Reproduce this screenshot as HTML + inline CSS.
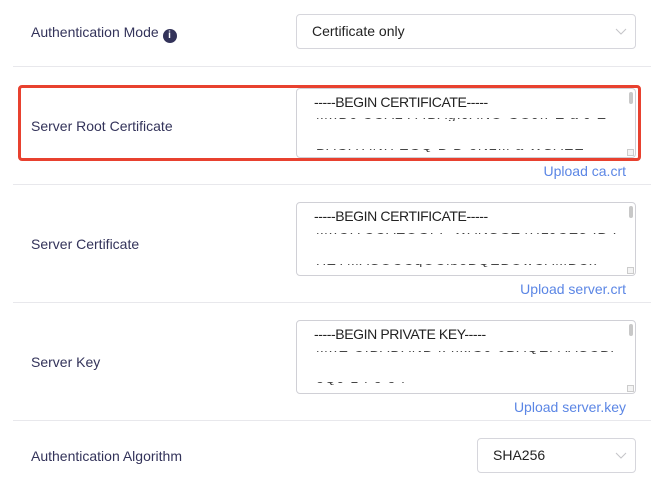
<!DOCTYPE html>
<html><head><style>
*{margin:0;padding:0;box-sizing:border-box}
body{width:669px;height:489px;background:#fff;font-family:"Liberation Sans",sans-serif;position:relative;overflow:hidden}
.lbl{position:absolute;left:31px;font-size:14px;color:#33335a}
.hr{position:absolute;left:13px;width:638px;height:1px;background:#e8e8ec}
.sel{position:absolute;border:1px solid #d6d6dc;border-radius:4px;font-size:14px;color:#222;padding-left:15px}
.sel svg{position:absolute;right:8px;top:13px}
.ta{position:absolute;left:296px;width:340px;border:1px solid #d0d0d6;border-radius:4px;overflow:hidden}
.ta .l1{position:absolute;left:17px;top:5px;font-size:14px;color:#222;letter-spacing:-0.4px}
.frag{position:absolute;left:19px;height:3px;width:300px;overflow:hidden}
.frag span{position:absolute;left:0;top:-11px;font-size:14px;line-height:14px;color:#444;white-space:nowrap;letter-spacing:1px}
.sb{position:absolute;right:2px;top:3px;width:4px;height:12px;background:#c8c8c8;border-radius:2px}
.rs{position:absolute;right:1px;bottom:1px;width:7px;height:7px;border:1px solid #ccc;background:#f4f4f4}
.up{position:absolute;right:43px;font-size:14px;color:#5b86e5}
</style></head><body>
<div class="lbl" style="top:24px">Authentication Mode <span style="display:inline-block;width:14px;height:14px;border-radius:50%;background:#33335a;color:#fff;font-size:10px;font-weight:bold;text-align:center;line-height:14px;vertical-align:-1px">i</span></div>
<div class="sel" style="left:296px;top:14px;width:340px;height:35px;line-height:33px">Certificate only<svg width="12" height="8" viewBox="0 0 12 8"><path d="M1 1l5 5 5-5" fill="none" stroke="#c4c4c8" stroke-width="1"/></svg></div>
<div class="hr" style="top:66px"></div>

<div style="position:absolute;left:18px;top:85px;width:623px;height:76px;border:3px solid #e8412f;border-radius:4px"></div>
<div class="lbl" style="top:118px">Server Root Certificate</div>
<div class="ta" style="top:88px;height:70px"><div class="l1">-----BEGIN CERTIFICATE-----</div><div class="frag" style="top:29px"><span>MIIDc CCA2 A IBAgIJANO GOJIPE a J E</span></div><div class="frag" style="top:60px"><span>BAGA ANH ZGQ B D oN2M a WSAEE</span></div><div class="sb"></div><div class="rs"></div></div>
<div class="up" style="top:163px">Upload ca.crt</div>
<div class="hr" style="top:184px"></div>

<div class="lbl" style="top:236px">Server Certificate</div>
<div class="ta" style="top:202px;height:74px"><div class="l1">-----BEGIN CERTIFICATE-----</div><div class="frag" style="top:30px"><span>MIICITCCAZOGFF WANSGZ4HLJCE3 IB Kf</span></div><div class="frag" style="top:61px"><span>HZYMASOCCqOCibeBQEBOwCAMBCx</span></div><div class="sb"></div><div class="rs"></div></div>
<div class="up" style="top:281px">Upload server.crt</div>
<div class="hr" style="top:302px"></div>

<div class="lbl" style="top:354px">Server Key</div>
<div class="ta" style="top:320px;height:74px"><div class="l1">-----BEGIN PRIVATE KEY-----</div><div class="frag" style="top:30px"><span>MIIE CIBADANB k hkiG9 0BAQEFAASCBK</span></div><div class="frag" style="top:61px"><span>oQ9 1 f o o f</span></div><div class="sb"></div><div class="rs"></div></div>
<div class="up" style="top:399px">Upload server.key</div>
<div class="hr" style="top:420px"></div>

<div class="lbl" style="top:448px">Authentication Algorithm</div>
<div class="sel" style="left:477px;top:438px;width:159px;height:35px;line-height:33px">SHA256<svg width="12" height="8" viewBox="0 0 12 8"><path d="M1 1l5 5 5-5" fill="none" stroke="#c4c4c8" stroke-width="1"/></svg></div>
</body></html>
